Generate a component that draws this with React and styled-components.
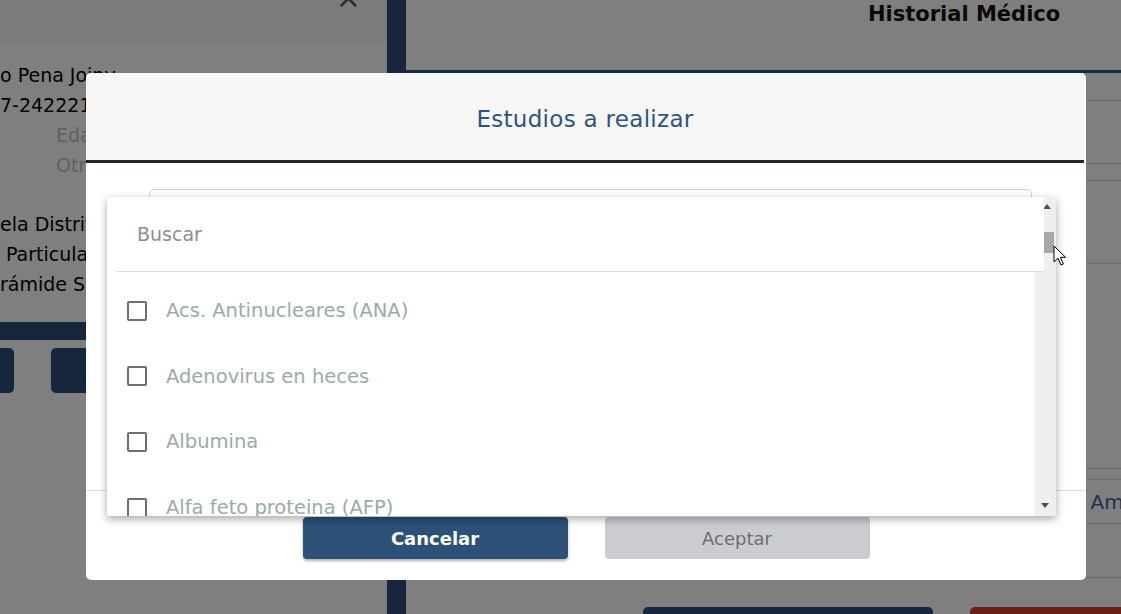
import React from 'react'
import styled, {createGlobalStyle} from "styled-components";

const Global=createGlobalStyle`
html,body{
    margin:0;
    padding:0;
    width:1121px;
    height:614px;
    overflow:hidden;
    background:#fff;
    font-family:"DejaVu Sans","Liberation Sans",sans-serif;
}
#root{width:1121px;height:614px;}
`

const Page=styled.div`
position:relative;
display:flex;
width:1121px;
height:614px;
overflow:hidden;
background:#fff;
`

/* ---- page behind the modal ---- */
const LeftPanel=styled.div`
width:387px;
flex-shrink:0;
display:flex;
flex-direction:column;
`
const LeftHeader=styled.div`
height:43px;
flex-shrink:0;
background:#f6f6f6;
display:flex;
justify-content:flex-end;
padding-right:26px;
box-sizing:border-box;
`
const CloseMark=styled.span`
margin-top:-17px;
font-size:30px;
line-height:30px;
color:#555;
`
const InfoBlock=styled.div`
padding-top:${p=>p.top}px;
flex-shrink:0;
`
const InfoLine=styled.p`
margin:0;
height:30px;
line-height:30px;
font-size:19px;
white-space:nowrap;
padding-left:${p=>p.indent||0}px;
color:${p=>p.muted?"#b9c3c3":"#000"};
`
const Band=styled.div`
margin-top:23px;
height:18px;
flex-shrink:0;
background:#2c4c7a;
`
const LeftButtons=styled.div`
display:flex;
gap:37px;
margin-top:8px;
margin-left:-86px;
`
const LeftButton=styled.div`
width:100px;
height:45px;
border-radius:5px;
background:#2c4c7a;
flex-shrink:0;
`
const SideBar=styled.div`
width:19px;
flex-shrink:0;
background:#2c4c7a;
`
const RightPanel=styled.div`
flex:1;
display:flex;
flex-direction:column;
`
const RightHeader=styled.div`
height:70px;
flex-shrink:0;
padding-left:462px;
box-sizing:border-box;
font-size:21px;
font-weight:bold;
line-height:28px;
color:#111;
white-space:nowrap;
`
const HeaderRule=styled.div`
height:3px;
flex-shrink:0;
background:#34507e;
`
const Row=styled.div`
height:${p=>p.h}px;
flex-shrink:0;
border-bottom:1px solid #d8d8d8;
display:flex;
align-items:center;
padding-left:650px;
font-size:20px;
color:#3d64a0;
white-space:nowrap;
`
const RightButtons=styled.div`
display:flex;
flex-shrink:0;
gap:37px;
margin-top:29px;
padding-left:237px;
`
const RightButton=styled.div`
width:${p=>p.w}px;
height:40px;
border-radius:5px;
flex-shrink:0;
background:${p=>p.red?"#d63c2e":"#2c4c7a"};
`

/* ---- modal ---- */
const Overlay=styled.div`
position:absolute;
inset:0;
background:rgba(0,0,0,0.5);
padding:73px 0 0 86px;
box-sizing:border-box;
`
const Modal=styled.div`
position:relative;
width:1000px;
height:507px;
background:#fff;
border-radius:5px;
display:flex;
flex-direction:column;
overflow:hidden;
`
const ModalHeader=styled.div`
height:90px;
margin-right:2px;
flex-shrink:0;
background:#f6f6f6;
border-bottom:3px solid #222529;
display:flex;
align-items:center;
justify-content:center;
padding-top:5px;
box-sizing:border-box;
font-size:23px;
color:#2e5480;
letter-spacing:0.3px;
`
const ModalBody=styled.div`
height:327px;
flex-shrink:0;
padding:26px 54px 0 63px;
box-sizing:border-box;
`
const SelectBox=styled.div`
height:40px;
border:1px solid #cfcfcf;
border-radius:5px;
`
const ModalFooter=styled.div`
flex:1;
border-top:1px solid #dedede;
display:flex;
justify-content:center;
gap:37px;
padding-top:26px;
`
const Button=styled.button`
width:265px;
height:42px;
border:none;
border-radius:4px;
font-family:inherit;
font-size:18px;
cursor:pointer;
background:${p=>p.primary?"#2c5177":"#cbccd1"};
color:${p=>p.primary?"#fff":"#6e6e6e"};
font-weight:${p=>p.primary?"bold":"normal"};
box-shadow:${p=>p.primary?"0 2px 3px rgba(0,0,0,0.3)":"none"};
`

/* ---- dropdown ---- */
const Dropdown=styled.div`
position:absolute;
left:21px;
top:124px;
width:949px;
height:319px;
background:#fff;
border-radius:2px;
box-shadow:0 3px 9px rgba(0,0,0,0.35);
display:flex;
overflow:hidden;
`
const DropMain=styled.div`
flex:1;
display:flex;
flex-direction:column;
min-width:0;
`
const SearchRow=styled.div`
position:relative;
z-index:1;
height:74px;
flex-shrink:0;
margin:0 -9px 0 9px;
padding-left:21px;
background:#fff;
border-bottom:1px solid #dddddd;
display:flex;
align-items:center;
font-size:19px;
color:#8e8e8e;
`
const List=styled.div`
flex:1;
padding-top:6px;
overflow:hidden;
`
const Item=styled.div`
height:65.6px;
display:flex;
align-items:center;
gap:19px;
padding-left:20px;
`
const Check=styled.span`
width:20px;
height:20px;
box-sizing:border-box;
border:2px solid #6f6f6f;
border-radius:2px;
flex-shrink:0;
`
const Label=styled.span`
font-size:19.5px;
color:#9aabab;
white-space:nowrap;
`
const Track=styled.div`
width:21px;
flex-shrink:0;
background:#efefef;
display:flex;
flex-direction:column;
`
const Arrow=styled.span`
width:0;
height:0;
margin-left:${p=>p.left}px;
border-left:4px solid transparent;
border-right:4px solid transparent;
${p=>p.down?"border-top:5px solid #505050;":"border-bottom:5px solid #505050;"}
`
const Thumb=styled.div`
width:10px;
height:21px;
margin:23px 0 0 9px;
background:#a8a8a8;
`
const Spacer=styled.div`flex:1;`

const Pointer=styled.svg`
position:absolute;
left:1053px;
top:245px;
`

const studies=["Acs. Antinucleares (ANA)","Adenovirus en heces","Albumina","Alfa feto proteina (AFP)","Amilasa"]

export default function App(){
    return (
        <React.Fragment>
          <Global/>
          <Page>
            <LeftPanel>
                <LeftHeader><CloseMark>×</CloseMark></LeftHeader>
                <InfoBlock top={17}>
                    <InfoLine>o Pena Jojny</InfoLine>
                    <InfoLine>7-24222114</InfoLine>
                    <InfoLine indent={56} muted>Edad</InfoLine>
                    <InfoLine indent={56} muted>Otros</InfoLine>
                </InfoBlock>
                <InfoBlock top={29}>
                    <InfoLine>ela Distrital</InfoLine>
                    <InfoLine indent={6}>Particular</InfoLine>
                    <InfoLine>rámide Sur</InfoLine>
                </InfoBlock>
                <Band/>
                <LeftButtons>
                    <LeftButton/>
                    <LeftButton/>
                </LeftButtons>
            </LeftPanel>
            <SideBar/>
            <RightPanel>
                <RightHeader>Historial Médico</RightHeader>
                <HeaderRule/>
                <Row h={27}/>
                <Row h={62}/>
                <Row h={16}/>
                <Row h={82}/>
                <Row h={204}/>
                <Row h={10}/>
                <Row h={43}>Dr. Amparo Ruiz</Row>
                <Row h={53}/>
                <RightButtons>
                    <RightButton w={290}/>
                    <RightButton w={200} red/>
                </RightButtons>
            </RightPanel>

            <Overlay>
                <Modal>
                    <ModalHeader>Estudios a realizar</ModalHeader>
                    <ModalBody>
                        <SelectBox/>
                    </ModalBody>
                    <ModalFooter>
                        <Button primary>Cancelar</Button>
                        <Button>Aceptar</Button>
                    </ModalFooter>
                    <Dropdown>
                        <DropMain>
                            <SearchRow>Buscar</SearchRow>
                            <List>
                                {studies.map((s)=>{
                                    return (<Item key={s}>
                                                <Check/>
                                                <Label>{s}</Label>
                                            </Item>)
                                })}
                            </List>
                        </DropMain>
                        <Track>
                            <div style={{height:"7px"}}/>
                            <Arrow left={8}/>
                            <Thumb/>
                            <Spacer/>
                            <Arrow left={6} down/>
                            <div style={{height:"8px"}}/>
                        </Track>
                    </Dropdown>
                </Modal>
            </Overlay>
            <Pointer width="14" height="22" viewBox="0 0 14 22">
                <path d="M1 1 L1 17 L5 13.2 L8 20 L10.4 19 L7.4 12.3 L12.6 12.3 Z" fill="#fff" stroke="#000" strokeWidth="1" strokeLinejoin="round"/>
            </Pointer>
          </Page>
        </React.Fragment>
    )
}
